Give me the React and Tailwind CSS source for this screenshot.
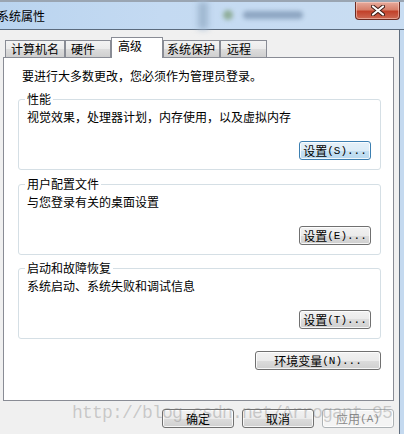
import React from "react";

const MONO = "font-['Liberation_Mono',monospace] text-[11px]";

function Btn({ label, hot, w = "w-[72px]", focus, disabled }) {
  let cls =
    "h-[19px] rounded-[3px] border flex items-center justify-center leading-[16px] shadow-[inset_0_0_0_1px_rgba(255,255,255,0.8)] ";
  if (focus) {
    cls +=
      "border-[#3c7fb1] bg-[linear-gradient(#e5f1f9_0%,#dcecf7_50%,#c6e1f3_50%,#b9d9ef_100%)] text-black";
  } else if (disabled) {
    cls += "border-[#adb2b5] bg-[#f4f4f4] text-[#8a8a8a]";
  } else {
    cls +=
      "border-[#707070] bg-[linear-gradient(#f2f2f2_0%,#ebebeb_50%,#dddddd_50%,#cfcfcf_100%)] text-black";
  }
  return (
    <div className={`${w} ${cls}`}>
      <span>{label}</span>
      {hot && <span className={MONO}>{hot}</span>}
    </div>
  );
}

function Group({ title, text, hot, focus, className }) {
  return (
    <fieldset
      className={`ml-[14px] mr-[12px] rounded-[3px] border border-[#d5dfe5] pl-[8px] pr-[9px] pt-[2px] pb-[9px] ${className}`}
    >
      <legend className="-ml-[2px] px-[2px] leading-[16px]">{title}</legend>
      <div className="leading-[16px]">{text}</div>
      <div className="mt-[16px] flex justify-end">
        <Btn label="设置" hot={hot} focus={focus} />
      </div>
    </fieldset>
  );
}

const tabs = [
  { t: "计算机名", w: "w-[60px]", pl: "pl-[5px]" },
  { t: "硬件", w: "w-[46px]", pl: "pl-[5px]" },
  { t: "高级", w: "w-[52px]", pl: "pl-[6px]", sel: true },
  { t: "系统保护", w: "w-[57px]", pl: "pl-[3px]" },
  { t: "远程", w: "w-[47px]", pl: "pl-[6px]" },
];

export default function App() {
  return (
    <div className="relative w-[404px] h-[434px] overflow-hidden bg-[#f0f0f0] flex flex-col text-[12px] text-black font-['Noto_Sans_CJK_SC','Liberation_Sans',sans-serif]">
      {/* title bar */}
      <div className="h-[30px] flex flex-col shrink-0">
        <div className="h-[2px] bg-[#9aa5b2]" />
        <div className="relative flex-1 flex items-start justify-between border-b border-[#5b6b7e] bg-[linear-gradient(90deg,#bad4ef_0%,#c4daf2_40%,#c9ddf2_100%)]">
          <div className="absolute left-[198px] top-0 h-full w-[10px] bg-[#9fb7d0] blur-[3px]" />
          <div className="absolute left-[223px] top-[8px] h-[10px] w-[10px] rounded-full bg-[#8fae9a] blur-[2px]" />
          <div className="absolute left-[243px] top-[9px] h-[8px] w-[60px] rounded bg-[#8ea6c2] blur-[2px]" />
          <span className="relative ml-[-3px] mt-[6px] text-[12px] leading-[16px] text-black">系统属性</span>
          <div className="relative mr-[4px] w-[45px] h-[18px] rounded-b-[4px] border border-t-0 border-[#6b2b22] bg-[linear-gradient(#e6aa9c_0%,#d7806b_45%,#c2412a_55%,#cd6a54_100%)] flex items-center justify-center shadow-[inset_0_0_0_1px_rgba(255,220,210,0.5)]">
            <svg width="14" height="11" viewBox="0 0 14 11">
              <path d="M2 1.5 L12 9.5 M12 1.5 L2 9.5" stroke="#3a1a14" strokeWidth="4" strokeLinecap="round" />
              <path d="M2 1.5 L12 9.5 M12 1.5 L2 9.5" stroke="#ffffff" strokeWidth="2.2" strokeLinecap="round" />
            </svg>
          </div>
        </div>
      </div>

      {/* body */}
      <div className="flex flex-1">
        <div className="w-[399px] flex flex-col pt-[7px]">
          {/* tabs */}
          <div className="ml-[5px] h-[20px] flex items-end">
            {tabs.map((tb) =>
              tb.sel ? (
                <div
                  key={tb.t}
                  className={`${tb.w} ${tb.pl} relative z-10 -mb-px h-[21px] border border-b-0 border-[#898c95] bg-white leading-[16px]`}
                >
                  {tb.t}
                </div>
              ) : (
                <div
                  key={tb.t}
                  className={`${tb.w} ${tb.pl} h-[17px] border border-b-0 border-[#898c95] bg-[linear-gradient(#f3f3f3_0%,#ebebeb_50%,#dddddd_50%,#cfcfcf_100%)] leading-[16px]`}
                >
                  {tb.t}
                </div>
              )
            )}
          </div>

          {/* panel */}
          <div className="ml-[3px] w-[391px] h-[344px] border border-[#898c95] bg-white flex flex-col pt-[10px]">
            <div className="ml-[18px] leading-[16px]">要进行大多数更改，您必须作为管理员登录。</div>
            <Group
              className="mt-[7px]"
              title="性能"
              text="视觉效果，处理器计划，内存使用，以及虚拟内存"
              hot="(S)..."
              focus
            />
            <Group
              className="mt-[6px]"
              title="用户配置文件"
              text="与您登录有关的桌面设置"
              hot="(E)..."
            />
            <Group
              className="mt-[5px]"
              title="启动和故障恢复"
              text="系统启动、系统失败和调试信息"
              hot="(T)..."
            />
            <div className="mt-[12px] mr-[12px] flex justify-end">
              <Btn label="环境变量" hot="(N)..." w="w-[126px]" />
            </div>
          </div>

          {/* bottom buttons */}
          <div className="mt-[8px] pr-[5px] flex justify-end gap-[8px]">
            <Btn label="确定" />
            <Btn label="取消" />
            <Btn label="应用" hot="(A)" disabled />
          </div>
        </div>
        <div className="w-px bg-[#5f6d7e]" />
        <div className="w-[4px] bg-[#c4d9ef]" />
      </div>

      {/* watermark */}
      <div className="pointer-events-none absolute left-[72px] top-[403px] whitespace-nowrap font-['Liberation_Mono',monospace] text-[18px] leading-[20px] tracking-[-0.8px] text-[#7a7a7a]/35">
        http://blog.csdn.net/Arrogant_95
      </div>
    </div>
  );
}
